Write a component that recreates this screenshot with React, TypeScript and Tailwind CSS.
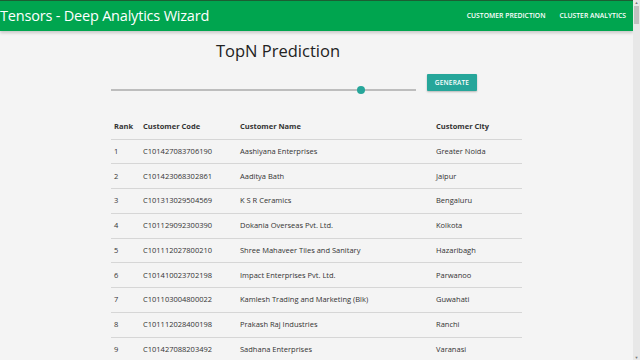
import { useState } from 'react';

interface Row {
  rank: number;
  code: string;
  name: string;
  city: string;
}

const rows: Row[] = [
  { rank: 1, code: 'C101427083706190', name: 'Aashiyana Enterprises', city: 'Greater Noida' },
  { rank: 2, code: 'C101423068302861', name: 'Aaditya Bath', city: 'Jaipur' },
  { rank: 3, code: 'C101313029504569', name: 'K S R Ceramics', city: 'Bengaluru' },
  { rank: 4, code: 'C101129092300390', name: 'Dokania Overseas Pvt. Ltd.', city: 'Kolkota' },
  { rank: 5, code: 'C101112027800210', name: 'Shree Mahaveer Tiles and Sanitary', city: 'Hazaribagh' },
  { rank: 6, code: 'C101410023702198', name: 'Impact Enterprises Pvt. Ltd.', city: 'Parwanoo' },
  { rank: 7, code: 'C101103004800022', name: 'Kamlesh Trading and Marketing (Blk)', city: 'Guwahati' },
  { rank: 8, code: 'C101112028400198', name: 'Prakash Raj Industries', city: 'Ranchi' },
  { rank: 9, code: 'C101427088203492', name: 'Sadhana Enterprises', city: 'Varanasi' },
];

const App = () => {
  const [topN] = useState(82);

  return (
    <div className="flex h-[360px] w-[640px] overflow-hidden bg-[#f4f4f4] text-[#333]" style={{ fontFamily: '"Open Sans", "Noto Sans", sans-serif' }}>
      <div className="flex min-w-0 flex-1 flex-col">
        {/* nav */}
        <div className="flex h-[31px] shrink-0 items-center justify-between border-t border-[#1c5e33] bg-[#00a54f] pr-[7px] text-white shadow-[0_2px_3px_rgba(0,0,0,0.18)]">
          <div className="text-[14.5px] leading-none tracking-[-0.2px]">Tensors - Deep Analytics Wizard</div>
          <div className="flex gap-[14px] text-[6.8px] font-semibold">
            <span>CUSTOMER PREDICTION</span>
            <span>CLUSTER ANALYTICS</span>
          </div>
        </div>

        <div className="mx-auto w-[411px]">
          <h1 className="mt-[9px] pl-[105px] text-[16.5px] leading-[22px] text-[#222]">TopN Prediction</h1>

          <div className="mt-[12px] flex items-center">
            <div className="relative mt-[14px] h-[2px] w-[305px] bg-[#bdbdbd]">
              <div className="absolute top-[-3px] h-[8px] w-[8px] rounded-full bg-[#26a69a]" style={{ left: `${(topN / 100) * 305 - 4}px` }} />
            </div>
            <button className="ml-[11px] h-[17px] w-[50px] rounded-[1px] bg-[#26a69a] text-[6.5px] font-semibold tracking-[0.2px] text-white shadow-[0_1px_2px_rgba(0,0,0,0.25)]">
              GENERATE
            </button>
          </div>

          <table className="mt-[23px] w-full border-collapse text-left text-[7.5px]">
            <thead>
              <tr className="h-[25px] border-b border-[#d6d6d6]">
                <th className="w-[32px] pl-[3px] font-bold">Rank</th>
                <th className="w-[97px] font-bold">Customer Code</th>
                <th className="w-[196px] font-bold">Customer Name</th>
                <th className="font-bold">Customer City</th>
              </tr>
            </thead>
            <tbody>
              {rows.map((r) => (
                <tr key={r.rank} className="h-[24.75px] border-b border-[#d6d6d6]">
                  <td className="pl-[3px]">{r.rank}</td>
                  <td>{r.code}</td>
                  <td>{r.name}</td>
                  <td>{r.city}</td>
                </tr>
              ))}
            </tbody>
          </table>
        </div>
      </div>

      {/* scrollbar */}
      <div className="flex w-[7px] shrink-0 flex-col bg-[#e8e8e8]">
        <div className="flex h-[5px] items-center justify-center text-[4px] text-[#777]">▲</div>
        <div className="mx-auto mt-[1px] h-[18px] w-[5px] bg-[#c1c1c1]" />
        <div className="flex-1" />
        <div className="flex h-[5px] items-center justify-center text-[4px] text-[#777]">▼</div>
      </div>
    </div>
  );
};

export default App;
